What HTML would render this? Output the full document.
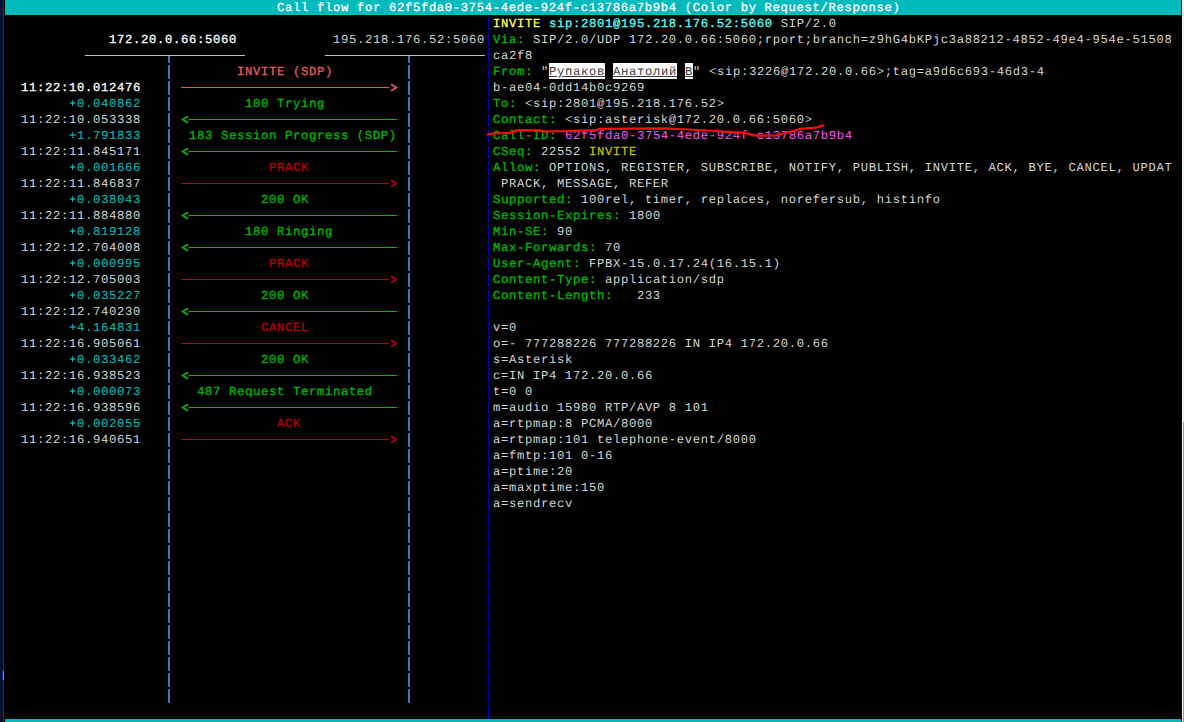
<!DOCTYPE html>
<html><head><meta charset="utf-8"><style>
html,body{margin:0;padding:0;background:#000;}
body{width:1184px;height:722px;overflow:hidden;position:relative;}
.r{position:absolute;height:16px;line-height:16px;white-space:pre;font-family:"Liberation Mono",monospace;font-size:12.2px;margin-top:1px;letter-spacing:0.68px;text-rendering:geometricPrecision;}
.p{position:absolute;width:2px;background:linear-gradient(to right,#3a7cc0 0,#3a7cc0 1px,#ac6612 1px,#ac6612 2px);}
.bp{position:absolute;width:1px;background:#0000b8;}
.cy{color:#3c3c3c;text-decoration:underline;}
</style></head><body>
<div style="position:absolute;left:0px;top:0px;width:3px;height:722px;background:#021430;"></div>
<div style="position:absolute;left:3px;top:0px;width:1px;height:722px;background:#2a3440;"></div>
<div style="position:absolute;left:5px;top:0px;width:1176px;height:15px;background:#00bbbb;"></div>
<div style="position:absolute;left:5px;top:719px;width:1176px;height:3px;background:#00bbbb;"></div>
<div style="position:absolute;left:1182px;top:0px;width:1px;height:722px;background:#ffffff;"></div>
<div style="position:absolute;left:1183px;top:0px;width:1px;height:422px;background:#f0f0f0;"></div>
<div style="position:absolute;left:1183px;top:422px;width:1px;height:300px;background:#9a9a9a;"></div>
<div style="position:absolute;left:2px;top:671px;width:1px;height:9px;background:#1020a0;"></div>
<div style="position:absolute;left:3px;top:671px;width:1px;height:9px;background:#8a9a80;"></div>
<div class="r" style="top:-1px;left:277px"><span style="color:#ffffff;-webkit-text-stroke:0.3px currentColor">Call flow for 62f5fda0-3754-4ede-924f-c13786a7b9b4 (Color by Request/Response)</span></div>
<div class="r" style="top:31px;left:109px"><span style="color:#ffffff;-webkit-text-stroke:0.3px currentColor">172.20.0.66:5060</span></div>
<div class="r" style="top:31px;left:333px"><span style="color:#d6d6d6">195.218.176.52:5060</span></div>
<div style="position:absolute;left:85px;top:55px;width:160px;height:1px;background:#c4c4c4;"></div>
<div style="position:absolute;left:325px;top:55px;width:160px;height:1px;background:#c4c4c4;"></div>
<div class="p" style="left:168px;top:56px;height:7px"></div>
<div class="p" style="left:168px;top:65px;height:14px"></div>
<div class="p" style="left:168px;top:81px;height:14px"></div>
<div class="p" style="left:168px;top:97px;height:14px"></div>
<div class="p" style="left:168px;top:113px;height:14px"></div>
<div class="p" style="left:168px;top:129px;height:14px"></div>
<div class="p" style="left:168px;top:145px;height:14px"></div>
<div class="p" style="left:168px;top:161px;height:14px"></div>
<div class="p" style="left:168px;top:177px;height:14px"></div>
<div class="p" style="left:168px;top:193px;height:14px"></div>
<div class="p" style="left:168px;top:209px;height:14px"></div>
<div class="p" style="left:168px;top:225px;height:14px"></div>
<div class="p" style="left:168px;top:241px;height:14px"></div>
<div class="p" style="left:168px;top:257px;height:14px"></div>
<div class="p" style="left:168px;top:273px;height:14px"></div>
<div class="p" style="left:168px;top:289px;height:14px"></div>
<div class="p" style="left:168px;top:305px;height:14px"></div>
<div class="p" style="left:168px;top:321px;height:14px"></div>
<div class="p" style="left:168px;top:337px;height:14px"></div>
<div class="p" style="left:168px;top:353px;height:14px"></div>
<div class="p" style="left:168px;top:369px;height:14px"></div>
<div class="p" style="left:168px;top:385px;height:14px"></div>
<div class="p" style="left:168px;top:401px;height:14px"></div>
<div class="p" style="left:168px;top:417px;height:14px"></div>
<div class="p" style="left:168px;top:433px;height:14px"></div>
<div class="p" style="left:168px;top:449px;height:14px"></div>
<div class="p" style="left:168px;top:465px;height:14px"></div>
<div class="p" style="left:168px;top:481px;height:14px"></div>
<div class="p" style="left:168px;top:497px;height:14px"></div>
<div class="p" style="left:168px;top:513px;height:14px"></div>
<div class="p" style="left:168px;top:529px;height:14px"></div>
<div class="p" style="left:168px;top:545px;height:14px"></div>
<div class="p" style="left:168px;top:561px;height:14px"></div>
<div class="p" style="left:168px;top:577px;height:14px"></div>
<div class="p" style="left:168px;top:593px;height:14px"></div>
<div class="p" style="left:168px;top:609px;height:14px"></div>
<div class="p" style="left:168px;top:625px;height:14px"></div>
<div class="p" style="left:168px;top:641px;height:14px"></div>
<div class="p" style="left:168px;top:657px;height:14px"></div>
<div class="p" style="left:168px;top:673px;height:14px"></div>
<div class="p" style="left:168px;top:689px;height:14px"></div>
<div class="p" style="left:408px;top:56px;height:7px"></div>
<div class="p" style="left:408px;top:65px;height:14px"></div>
<div class="p" style="left:408px;top:81px;height:14px"></div>
<div class="p" style="left:408px;top:97px;height:14px"></div>
<div class="p" style="left:408px;top:113px;height:14px"></div>
<div class="p" style="left:408px;top:129px;height:14px"></div>
<div class="p" style="left:408px;top:145px;height:14px"></div>
<div class="p" style="left:408px;top:161px;height:14px"></div>
<div class="p" style="left:408px;top:177px;height:14px"></div>
<div class="p" style="left:408px;top:193px;height:14px"></div>
<div class="p" style="left:408px;top:209px;height:14px"></div>
<div class="p" style="left:408px;top:225px;height:14px"></div>
<div class="p" style="left:408px;top:241px;height:14px"></div>
<div class="p" style="left:408px;top:257px;height:14px"></div>
<div class="p" style="left:408px;top:273px;height:14px"></div>
<div class="p" style="left:408px;top:289px;height:14px"></div>
<div class="p" style="left:408px;top:305px;height:14px"></div>
<div class="p" style="left:408px;top:321px;height:14px"></div>
<div class="p" style="left:408px;top:337px;height:14px"></div>
<div class="p" style="left:408px;top:353px;height:14px"></div>
<div class="p" style="left:408px;top:369px;height:14px"></div>
<div class="p" style="left:408px;top:385px;height:14px"></div>
<div class="p" style="left:408px;top:401px;height:14px"></div>
<div class="p" style="left:408px;top:417px;height:14px"></div>
<div class="p" style="left:408px;top:433px;height:14px"></div>
<div class="p" style="left:408px;top:449px;height:14px"></div>
<div class="p" style="left:408px;top:465px;height:14px"></div>
<div class="p" style="left:408px;top:481px;height:14px"></div>
<div class="p" style="left:408px;top:497px;height:14px"></div>
<div class="p" style="left:408px;top:513px;height:14px"></div>
<div class="p" style="left:408px;top:529px;height:14px"></div>
<div class="p" style="left:408px;top:545px;height:14px"></div>
<div class="p" style="left:408px;top:561px;height:14px"></div>
<div class="p" style="left:408px;top:577px;height:14px"></div>
<div class="p" style="left:408px;top:593px;height:14px"></div>
<div class="p" style="left:408px;top:609px;height:14px"></div>
<div class="p" style="left:408px;top:625px;height:14px"></div>
<div class="p" style="left:408px;top:641px;height:14px"></div>
<div class="p" style="left:408px;top:657px;height:14px"></div>
<div class="p" style="left:408px;top:673px;height:14px"></div>
<div class="p" style="left:408px;top:689px;height:14px"></div>
<div class="bp" style="left:488px;top:17px;height:14px"></div>
<div class="bp" style="left:488px;top:33px;height:14px"></div>
<div class="bp" style="left:488px;top:49px;height:14px"></div>
<div class="bp" style="left:488px;top:65px;height:14px"></div>
<div class="bp" style="left:488px;top:81px;height:14px"></div>
<div class="bp" style="left:488px;top:97px;height:14px"></div>
<div class="bp" style="left:488px;top:113px;height:14px"></div>
<div class="bp" style="left:488px;top:129px;height:14px"></div>
<div class="bp" style="left:488px;top:145px;height:14px"></div>
<div class="bp" style="left:488px;top:161px;height:14px"></div>
<div class="bp" style="left:488px;top:177px;height:14px"></div>
<div class="bp" style="left:488px;top:193px;height:14px"></div>
<div class="bp" style="left:488px;top:209px;height:14px"></div>
<div class="bp" style="left:488px;top:225px;height:14px"></div>
<div class="bp" style="left:488px;top:241px;height:14px"></div>
<div class="bp" style="left:488px;top:257px;height:14px"></div>
<div class="bp" style="left:488px;top:273px;height:14px"></div>
<div class="bp" style="left:488px;top:289px;height:14px"></div>
<div class="bp" style="left:488px;top:305px;height:14px"></div>
<div class="bp" style="left:488px;top:321px;height:14px"></div>
<div class="bp" style="left:488px;top:337px;height:14px"></div>
<div class="bp" style="left:488px;top:353px;height:14px"></div>
<div class="bp" style="left:488px;top:369px;height:14px"></div>
<div class="bp" style="left:488px;top:385px;height:14px"></div>
<div class="bp" style="left:488px;top:401px;height:14px"></div>
<div class="bp" style="left:488px;top:417px;height:14px"></div>
<div class="bp" style="left:488px;top:433px;height:14px"></div>
<div class="bp" style="left:488px;top:449px;height:14px"></div>
<div class="bp" style="left:488px;top:465px;height:14px"></div>
<div class="bp" style="left:488px;top:481px;height:14px"></div>
<div class="bp" style="left:488px;top:497px;height:14px"></div>
<div class="bp" style="left:488px;top:513px;height:14px"></div>
<div class="bp" style="left:488px;top:529px;height:14px"></div>
<div class="bp" style="left:488px;top:545px;height:14px"></div>
<div class="bp" style="left:488px;top:561px;height:14px"></div>
<div class="bp" style="left:488px;top:577px;height:14px"></div>
<div class="bp" style="left:488px;top:593px;height:14px"></div>
<div class="bp" style="left:488px;top:609px;height:14px"></div>
<div class="bp" style="left:488px;top:625px;height:14px"></div>
<div class="bp" style="left:488px;top:641px;height:14px"></div>
<div class="bp" style="left:488px;top:657px;height:14px"></div>
<div class="bp" style="left:488px;top:673px;height:14px"></div>
<div class="bp" style="left:488px;top:689px;height:14px"></div>
<div class="bp" style="left:488px;top:705px;height:14px"></div>
<div class="r" style="top:63px;left:237px"><span style="color:#ee5a5a;-webkit-text-stroke:0.3px currentColor">INVITE (SDP)</span></div>
<div class="r" style="top:79px;left:21px"><span style="color:#ffffff;-webkit-text-stroke:0.3px currentColor">11:22:10.012476</span></div>
<div style="position:absolute;left:181px;top:87px;width:208px;height:1px;background:#ee5a5a;"></div>
<svg style="position:absolute;left:389px;top:82px" width="9" height="11"><polyline points="2,2.2 7.5,5.5 2,8.8" fill="none" stroke="#ee5a5a" stroke-width="1.6"/></svg>
<div class="r" style="top:95px;left:245px"><span style="color:#00bb00;-webkit-text-stroke:0.3px currentColor">100 Trying</span></div>
<div class="r" style="top:95px;left:69px"><span style="color:#00c4c4">+0.040862</span></div>
<div class="r" style="top:111px;left:21px"><span style="color:#d6d6d6">11:22:10.053338</span></div>
<div style="position:absolute;left:189px;top:119px;width:208px;height:1px;background:#00bb00;"></div>
<svg style="position:absolute;left:181px;top:114px" width="9" height="11"><polyline points="7,2.2 1.5,5.5 7,8.8" fill="none" stroke="#00bb00" stroke-width="1.6"/></svg>
<div class="r" style="top:127px;left:189px"><span style="color:#00bb00;-webkit-text-stroke:0.3px currentColor">183 Session Progress (SDP)</span></div>
<div class="r" style="top:127px;left:69px"><span style="color:#00c4c4">+1.791833</span></div>
<div class="r" style="top:143px;left:21px"><span style="color:#d6d6d6">11:22:11.845171</span></div>
<div style="position:absolute;left:189px;top:151px;width:208px;height:1px;background:#00bb00;"></div>
<svg style="position:absolute;left:181px;top:146px" width="9" height="11"><polyline points="7,2.2 1.5,5.5 7,8.8" fill="none" stroke="#00bb00" stroke-width="1.6"/></svg>
<div class="r" style="top:159px;left:269px"><span style="color:#bb0000;-webkit-text-stroke:0.3px currentColor">PRACK</span></div>
<div class="r" style="top:159px;left:69px"><span style="color:#00c4c4">+0.001666</span></div>
<div class="r" style="top:175px;left:21px"><span style="color:#d6d6d6">11:22:11.846837</span></div>
<div style="position:absolute;left:181px;top:183px;width:208px;height:1px;background:#bb0000;"></div>
<svg style="position:absolute;left:389px;top:178px" width="9" height="11"><polyline points="2,2.2 7.5,5.5 2,8.8" fill="none" stroke="#bb0000" stroke-width="1.6"/></svg>
<div class="r" style="top:191px;left:261px"><span style="color:#00bb00;-webkit-text-stroke:0.3px currentColor">200 OK</span></div>
<div class="r" style="top:191px;left:69px"><span style="color:#00c4c4">+0.038043</span></div>
<div class="r" style="top:207px;left:21px"><span style="color:#d6d6d6">11:22:11.884880</span></div>
<div style="position:absolute;left:189px;top:215px;width:208px;height:1px;background:#00bb00;"></div>
<svg style="position:absolute;left:181px;top:210px" width="9" height="11"><polyline points="7,2.2 1.5,5.5 7,8.8" fill="none" stroke="#00bb00" stroke-width="1.6"/></svg>
<div class="r" style="top:223px;left:245px"><span style="color:#00bb00;-webkit-text-stroke:0.3px currentColor">180 Ringing</span></div>
<div class="r" style="top:223px;left:69px"><span style="color:#00c4c4">+0.819128</span></div>
<div class="r" style="top:239px;left:21px"><span style="color:#d6d6d6">11:22:12.704008</span></div>
<div style="position:absolute;left:189px;top:247px;width:208px;height:1px;background:#00bb00;"></div>
<svg style="position:absolute;left:181px;top:242px" width="9" height="11"><polyline points="7,2.2 1.5,5.5 7,8.8" fill="none" stroke="#00bb00" stroke-width="1.6"/></svg>
<div class="r" style="top:255px;left:269px"><span style="color:#bb0000;-webkit-text-stroke:0.3px currentColor">PRACK</span></div>
<div class="r" style="top:255px;left:69px"><span style="color:#00c4c4">+0.000995</span></div>
<div class="r" style="top:271px;left:21px"><span style="color:#d6d6d6">11:22:12.705003</span></div>
<div style="position:absolute;left:181px;top:279px;width:208px;height:1px;background:#bb0000;"></div>
<svg style="position:absolute;left:389px;top:274px" width="9" height="11"><polyline points="2,2.2 7.5,5.5 2,8.8" fill="none" stroke="#bb0000" stroke-width="1.6"/></svg>
<div class="r" style="top:287px;left:261px"><span style="color:#00bb00;-webkit-text-stroke:0.3px currentColor">200 OK</span></div>
<div class="r" style="top:287px;left:69px"><span style="color:#00c4c4">+0.035227</span></div>
<div class="r" style="top:303px;left:21px"><span style="color:#d6d6d6">11:22:12.740230</span></div>
<div style="position:absolute;left:189px;top:311px;width:208px;height:1px;background:#00bb00;"></div>
<svg style="position:absolute;left:181px;top:306px" width="9" height="11"><polyline points="7,2.2 1.5,5.5 7,8.8" fill="none" stroke="#00bb00" stroke-width="1.6"/></svg>
<div class="r" style="top:319px;left:261px"><span style="color:#bb0000;-webkit-text-stroke:0.3px currentColor">CANCEL</span></div>
<div class="r" style="top:319px;left:69px"><span style="color:#00c4c4">+4.164831</span></div>
<div class="r" style="top:335px;left:21px"><span style="color:#d6d6d6">11:22:16.905061</span></div>
<div style="position:absolute;left:181px;top:343px;width:208px;height:1px;background:#bb0000;"></div>
<svg style="position:absolute;left:389px;top:338px" width="9" height="11"><polyline points="2,2.2 7.5,5.5 2,8.8" fill="none" stroke="#bb0000" stroke-width="1.6"/></svg>
<div class="r" style="top:351px;left:261px"><span style="color:#00bb00;-webkit-text-stroke:0.3px currentColor">200 OK</span></div>
<div class="r" style="top:351px;left:69px"><span style="color:#00c4c4">+0.033462</span></div>
<div class="r" style="top:367px;left:21px"><span style="color:#d6d6d6">11:22:16.938523</span></div>
<div style="position:absolute;left:189px;top:375px;width:208px;height:1px;background:#00bb00;"></div>
<svg style="position:absolute;left:181px;top:370px" width="9" height="11"><polyline points="7,2.2 1.5,5.5 7,8.8" fill="none" stroke="#00bb00" stroke-width="1.6"/></svg>
<div class="r" style="top:383px;left:197px"><span style="color:#00bb00;-webkit-text-stroke:0.3px currentColor">487 Request Terminated</span></div>
<div class="r" style="top:383px;left:69px"><span style="color:#00c4c4">+0.000073</span></div>
<div class="r" style="top:399px;left:21px"><span style="color:#d6d6d6">11:22:16.938596</span></div>
<div style="position:absolute;left:189px;top:407px;width:208px;height:1px;background:#00bb00;"></div>
<svg style="position:absolute;left:181px;top:402px" width="9" height="11"><polyline points="7,2.2 1.5,5.5 7,8.8" fill="none" stroke="#00bb00" stroke-width="1.6"/></svg>
<div class="r" style="top:415px;left:277px"><span style="color:#bb0000;-webkit-text-stroke:0.3px currentColor">ACK</span></div>
<div class="r" style="top:415px;left:69px"><span style="color:#00c4c4">+0.002055</span></div>
<div class="r" style="top:431px;left:21px"><span style="color:#d6d6d6">11:22:16.940651</span></div>
<div style="position:absolute;left:181px;top:439px;width:208px;height:1px;background:#bb0000;"></div>
<svg style="position:absolute;left:389px;top:434px" width="9" height="11"><polyline points="2,2.2 7.5,5.5 2,8.8" fill="none" stroke="#bb0000" stroke-width="1.6"/></svg>
<div class="r" style="top:15px;left:493px"><span style="color:#ffff55;-webkit-text-stroke:0.3px currentColor">INVITE</span><span style="color:#55ffff;-webkit-text-stroke:0.3px currentColor"> sip:2801@195.218.176.52:5060</span><span style="color:#d6d6d6"> SIP/2.0</span></div>
<div class="r" style="top:31px;left:493px"><span style="color:#00bb00;-webkit-text-stroke:0.3px currentColor">Via:</span><span style="color:#d6d6d6"> SIP/2.0/UDP 172.20.0.66:5060;rport;branch=z9hG4bKPjc3a88212-4852-49e4-954e-51508</span></div>
<div class="r" style="top:47px;left:493px"><span style="color:#d6d6d6">ca2f8</span></div>
<div class="r" style="top:63px;left:493px"><span style="color:#00bb00;-webkit-text-stroke:0.3px currentColor">From:</span><span style="color:#d6d6d6"> &quot;</span></div>
<div style="position:absolute;left:549px;top:63px;width:56px;height:16px;background:#ffffff;"></div>
<div class="r cy" style="top:63px;left:549px">Рупаков</div>
<div style="position:absolute;left:613px;top:63px;width:64px;height:16px;background:#ffffff;"></div>
<div class="r cy" style="top:63px;left:613px">Анатолий</div>
<div style="position:absolute;left:685px;top:63px;width:8px;height:16px;background:#ffffff;"></div>
<div class="r cy" style="top:63px;left:685px">В</div>
<div class="r" style="top:63px;left:693px"><span style="color:#d6d6d6">&quot; &lt;sip:3226@172.20.0.66&gt;;tag=a9d6c693-46d3-4</span></div>
<div class="r" style="top:79px;left:493px"><span style="color:#d6d6d6">b-ae04-0dd14b0c9269</span></div>
<div class="r" style="top:95px;left:493px"><span style="color:#00bb00;-webkit-text-stroke:0.3px currentColor">To:</span><span style="color:#d6d6d6"> &lt;sip:2801@195.218.176.52&gt;</span></div>
<div class="r" style="top:111px;left:493px"><span style="color:#00bb00;-webkit-text-stroke:0.3px currentColor">Contact:</span><span style="color:#d6d6d6"> &lt;sip:asterisk@172.20.0.66:5060&gt;</span></div>
<div class="r" style="top:127px;left:493px"><span style="color:#00bb00;-webkit-text-stroke:0.3px currentColor">Call-ID:</span><span style="color:#ff55ff"> 62f5fda0-3754-4ede-924f-c13786a7b9b4</span></div>
<div class="r" style="top:143px;left:493px"><span style="color:#00bb00;-webkit-text-stroke:0.3px currentColor">CSeq:</span><span style="color:#d6d6d6"> 22552 </span><span style="color:#bbbb00;-webkit-text-stroke:0.3px currentColor">INVITE</span></div>
<div class="r" style="top:159px;left:493px"><span style="color:#00bb00;-webkit-text-stroke:0.3px currentColor">Allow:</span><span style="color:#d6d6d6"> OPTIONS, REGISTER, SUBSCRIBE, NOTIFY, PUBLISH, INVITE, ACK, BYE, CANCEL, UPDAT</span></div>
<div class="r" style="top:175px;left:493px"><span style="color:#d6d6d6"> PRACK, MESSAGE, REFER</span></div>
<div class="r" style="top:191px;left:493px"><span style="color:#00bb00;-webkit-text-stroke:0.3px currentColor">Supported:</span><span style="color:#d6d6d6"> 100rel, timer, replaces, norefersub, histinfo</span></div>
<div class="r" style="top:207px;left:493px"><span style="color:#00bb00;-webkit-text-stroke:0.3px currentColor">Session-Expires:</span><span style="color:#d6d6d6"> 1800</span></div>
<div class="r" style="top:223px;left:493px"><span style="color:#00bb00;-webkit-text-stroke:0.3px currentColor">Min-SE:</span><span style="color:#d6d6d6"> 90</span></div>
<div class="r" style="top:239px;left:493px"><span style="color:#00bb00;-webkit-text-stroke:0.3px currentColor">Max-Forwards:</span><span style="color:#d6d6d6"> 70</span></div>
<div class="r" style="top:255px;left:493px"><span style="color:#00bb00;-webkit-text-stroke:0.3px currentColor">User-Agent:</span><span style="color:#d6d6d6"> FPBX-15.0.17.24(16.15.1)</span></div>
<div class="r" style="top:271px;left:493px"><span style="color:#00bb00;-webkit-text-stroke:0.3px currentColor">Content-Type:</span><span style="color:#d6d6d6"> application/sdp</span></div>
<div class="r" style="top:287px;left:493px"><span style="color:#00bb00;-webkit-text-stroke:0.3px currentColor">Content-Length:</span><span style="color:#d6d6d6">   233</span></div>
<div class="r" style="top:319px;left:493px"><span style="color:#d6d6d6">v=0</span></div>
<div class="r" style="top:335px;left:493px"><span style="color:#d6d6d6">o=- 777288226 777288226 IN IP4 172.20.0.66</span></div>
<div class="r" style="top:351px;left:493px"><span style="color:#d6d6d6">s=Asterisk</span></div>
<div class="r" style="top:367px;left:493px"><span style="color:#d6d6d6">c=IN IP4 172.20.0.66</span></div>
<div class="r" style="top:383px;left:493px"><span style="color:#d6d6d6">t=0 0</span></div>
<div class="r" style="top:399px;left:493px"><span style="color:#d6d6d6">m=audio 15980 RTP/AVP 8 101</span></div>
<div class="r" style="top:415px;left:493px"><span style="color:#d6d6d6">a=rtpmap:8 PCMA/8000</span></div>
<div class="r" style="top:431px;left:493px"><span style="color:#d6d6d6">a=rtpmap:101 telephone-event/8000</span></div>
<div class="r" style="top:447px;left:493px"><span style="color:#d6d6d6">a=fmtp:101 0-16</span></div>
<div class="r" style="top:463px;left:493px"><span style="color:#d6d6d6">a=ptime:20</span></div>
<div class="r" style="top:479px;left:493px"><span style="color:#d6d6d6">a=maxptime:150</span></div>
<div class="r" style="top:495px;left:493px"><span style="color:#d6d6d6">a=sendrecv</span></div>
<svg style="position:absolute;left:0;top:0" width="1184" height="722"><path d="M487.7,134.5 L493,133.5 L512,132.8 C514.5,131.3 515.5,130.6 518,130.2 L540,130.3 L543,131.4 L564,131.2 L596,130.1 L599.5,128.9 L664,128.4 L689,129.5 L714.7,131 L740,132.7 L747.4,133.2 L752.4,135.2 L761,135.7 L776,135.3 L791.3,131.5 L798.9,129.2 L815.8,127.7 L820,126.4 L823,125.4" fill="none" stroke="#ff0a0a" stroke-width="2.2" stroke-linecap="round" stroke-linejoin="round"/></svg>
</body></html>
